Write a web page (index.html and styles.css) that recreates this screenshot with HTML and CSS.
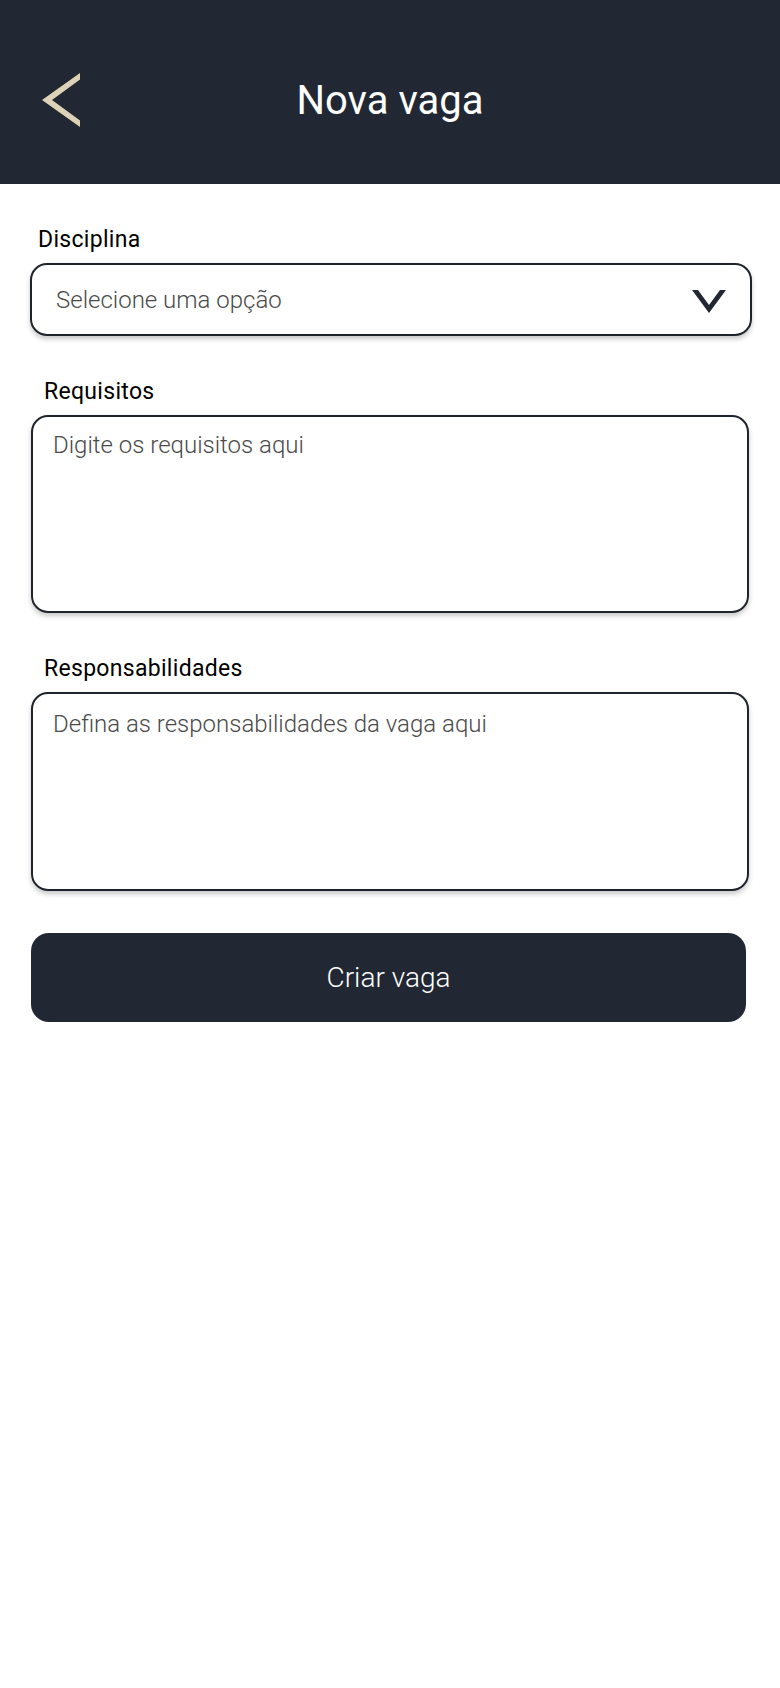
FILE: index.html
```html
<!DOCTYPE html>
<html lang="pt-BR">
<head>
<meta charset="utf-8">
<title>Nova vaga</title>
<link rel="stylesheet" href="styles.css">
</head>
<body>
<header class="topbar">
  <div class="back">
    <svg width="50" height="64" viewBox="0 0 50 64"><polygon points="48,1 10,28 48,55 48,48.4 20,28 48,7.6" fill="#ded2b9"/></svg>
  </div>
  <h1 class="title">Nova vaga</h1>
  <div></div>
</header>
<main class="form">
  <label class="label label-first">Disciplina</label>
  <div class="select">
    <span class="placeholder">Selecione uma opção</span>
    <svg class="caret" width="34" height="24" viewBox="0 0 34 24"><polygon points="0,1 6,1 17,16 28,1 34,1 17,24" fill="#222833"/></svg>
  </div>
  <label class="label">Requisitos</label>
  <div class="area"><span class="placeholder">Digite os requisitos aqui</span></div>
  <label class="label">Responsabilidades</label>
  <div class="area area-2"><span class="placeholder">Defina as responsabilidades da vaga aqui</span></div>
  <button class="submit">Criar vaga</button>
</main>
</body>
</html>
```

FILE: styles.css
```css
* { box-sizing: border-box; }
html, body { margin: 0; padding: 0; background: #ffffff; }
body { font-family: Roboto, "Noto Sans", sans-serif; width: 780px; }

.topbar {
  height: 184px;
  background: #222833;
  display: grid;
  grid-template-columns: 1fr auto 1fr;
  align-items: center;
}
.back { padding-left: 32px; display: flex; align-items: center; padding-top: 23px; }
.back svg { display: block; }
.title {
  margin: 0;
  color: #ffffff;
  font-weight: 400;
  font-size: 40px;
  line-height: 48px;
  padding-top: 18px;
}

.form { display: flex; flex-direction: column; padding: 0 31px 0 31px; }

.label {
  font-size: 23px;
  letter-spacing: 0.3px;
  line-height: 26px;
  color: #000000;
  margin: 43px 0 10px 13px;
}
.label-first { margin: 43px 0 10px 7px; }

.select {
  margin-left: -1px;
  margin-right: -3px;
  height: 73px;
  border: 2px solid #1f232b;
  border-radius: 17px;
  box-shadow: 0 3px 5px rgba(0,0,0,0.22);
  display: flex;
  align-items: center;
  justify-content: space-between;
  padding: 0 24px 0 24px;
}
.caret { display: block; margin-top: 2px; }

.placeholder {
  font-size: 24px;
  font-weight: 300;
  color: #4a4a4a;
  line-height: 28px;
}

.area {
  height: 198px;
  border: 2px solid #1f232b;
  border-radius: 17px;
  box-shadow: 0 3px 5px rgba(0,0,0,0.22);
  padding: 14px 20px;
}
.area-2 { height: 199px; padding-top: 16px; }

.submit {
  margin-top: 42px;
  margin-right: 3px;
  height: 89px;
  border: none;
  border-radius: 18px;
  background: #222833;
  color: #ffffff;
  font-family: Roboto, "Noto Sans", sans-serif;
  font-weight: 300;
  font-size: 28px;
  padding: 0;
  padding-left: 0;
}
```
